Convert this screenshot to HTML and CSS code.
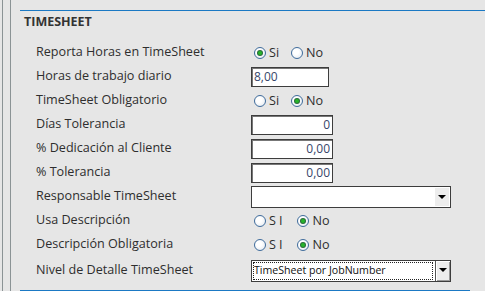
FILE: index.html
```html
<!DOCTYPE html>
<html lang="es">
<head>
    <meta charset="UTF-8">
    <meta name="viewport" content="width=device-width, initial-scale=1.0">
    <link rel="stylesheet" href="styles.css">
</head>
<body>
    <div class="frame">
        <div class="rail"></div>
        <div class="panel">
            <div class="panel-title">TIMESHEET</div>
            <div class="form">
                <div class="row">
                    <span class="label">Reporta Horas en TimeSheet</span>
                    <div class="radios">
                        <span class="radio"><span class="dot on"></span>Si</span>
                        <span class="radio"><span class="dot"></span>No</span>
                    </div>
                </div>
                <div class="row">
                    <span class="label">Horas de trabajo diario</span>
                    <div class="input short">8,00</div>
                </div>
                <div class="row">
                    <span class="label">TimeSheet Obligatorio</span>
                    <div class="radios">
                        <span class="radio"><span class="dot"></span>Si</span>
                        <span class="radio"><span class="dot on"></span>No</span>
                    </div>
                </div>
                <div class="row">
                    <span class="label">Días Tolerancia</span>
                    <div class="input num">0</div>
                </div>
                <div class="row">
                    <span class="label">% Dedicación al Cliente</span>
                    <div class="input num">0,00</div>
                </div>
                <div class="row">
                    <span class="label">% Tolerancia</span>
                    <div class="input num">0,00</div>
                </div>
                <div class="row">
                    <span class="label">Responsable TimeSheet</span>
                    <div class="select">
                        <span class="select-text"></span>
                        <span class="arrow flat"></span>
                    </div>
                </div>
                <div class="row">
                    <span class="label">Usa Descripción</span>
                    <div class="radios">
                        <span class="radio"><span class="dot"></span><span class="si">SI</span></span>
                        <span class="radio"><span class="dot on"></span>No</span>
                    </div>
                </div>
                <div class="row">
                    <span class="label">Descripción Obligatoria</span>
                    <div class="radios">
                        <span class="radio"><span class="dot"></span><span class="si">SI</span></span>
                        <span class="radio"><span class="dot on"></span>No</span>
                    </div>
                </div>
                <div class="row last">
                    <span class="label">Nivel de Detalle TimeSheet</span>
                    <div class="select">
                        <span class="select-text focus">TimeSheet por JobNumber</span>
                        <span class="arrow button"></span>
                    </div>
                </div>
            </div>
            <div class="panel-foot"></div>
        </div>
    </div>
</body>
</html>
```

FILE: styles.css
```css
body {
    margin: 0;
    background: #e6e6e6;
    font-family: 'Open Sans', sans-serif;
    font-size: 12.6px;
    color: #2e2e2e;
}
.frame {
    display: flex;
    height: 291px;
    overflow: hidden;
}
.rail {
    margin-left: 2px;
    width: 7px;
    border-left: 1px solid #8b9395;
    border-right: 1px solid #8b9395;
    flex-shrink: 0;
}
.panel {
    flex: 1;
    margin-left: 9px;
    margin-top: 10px;
    border-top: 1px solid #1b79c4;
}
.panel-title {
    padding: 2px 0 0 4px;
    height: 20px;
    font-size: 12.5px;
    font-weight: bold;
    color: #333;
}
.form {
    padding: 7px 0 0 16px;
}
.row {
    display: grid;
    grid-template-columns: 215px 1fr;
    align-items: center;
    height: 24px;
}
.row.last {
    margin-top: 2px;
}
.label {
    margin-top: -2px;
}
.radios {
    display: flex;
    gap: 12px;
    padding-left: 3px;
    margin-top: 1px;
}
.radio {
    display: flex;
    align-items: center;
    gap: 3px;
}
.si {
    letter-spacing: 3px;
}
.dot {
    width: 10px;
    height: 10px;
    border: 1px solid #3f6c9c;
    border-radius: 50%;
    background: radial-gradient(circle at 40% 40%, #ffffff 30%, #dfe5ec 100%);
    display: flex;
    align-items: center;
    justify-content: center;
}
.dot.on::after {
    content: '';
    width: 4px;
    height: 4px;
    border-radius: 50%;
    background: #27b52a;
    box-shadow: 0 0 0 1px #2a6a3a;
}
.input {
    width: 76px;
    height: 18px;
    border: 1px solid #3d3d3d;
    box-shadow: inset 1px 1px 0 #777;
    background: #fff;
    padding: 0 2px;
    line-height: 18px;
    font-size: 12px;
    color: #36466a;
    margin-top: 1px;
}
.input.short {
    width: 72px;
}
.input.num {
    text-align: right;
}
.select {
    display: flex;
    width: 198px;
    height: 20px;
    border: 1px solid #3d3d3d;
    background: #fff;
    margin-top: 1px;
}
.select-text {
    flex: 1;
    margin: 2px 3px 2px 2px;
    font-size: 10.6px;
    line-height: 14px;
    color: #111;
}
.select-text.focus {
    outline: 1px dotted #222;
}
.arrow {
    width: 14px;
    margin: 1px;
    background: #ededed;
    position: relative;
}
.arrow::after {
    content: '';
    position: absolute;
    left: 3px;
    top: 7px;
    border-left: 4px solid transparent;
    border-right: 4px solid transparent;
    border-top: 4px solid #000;
}
.arrow.button {
    margin: 0;
    border-left: 1px solid #555;
    box-shadow: inset 1px 1px 0 #fff, inset -1px -1px 0 #999;
}
.panel-foot {
    width: 450px;
    margin-top: 8px;
    border-top: 2px solid #1b79c4;
}
```
